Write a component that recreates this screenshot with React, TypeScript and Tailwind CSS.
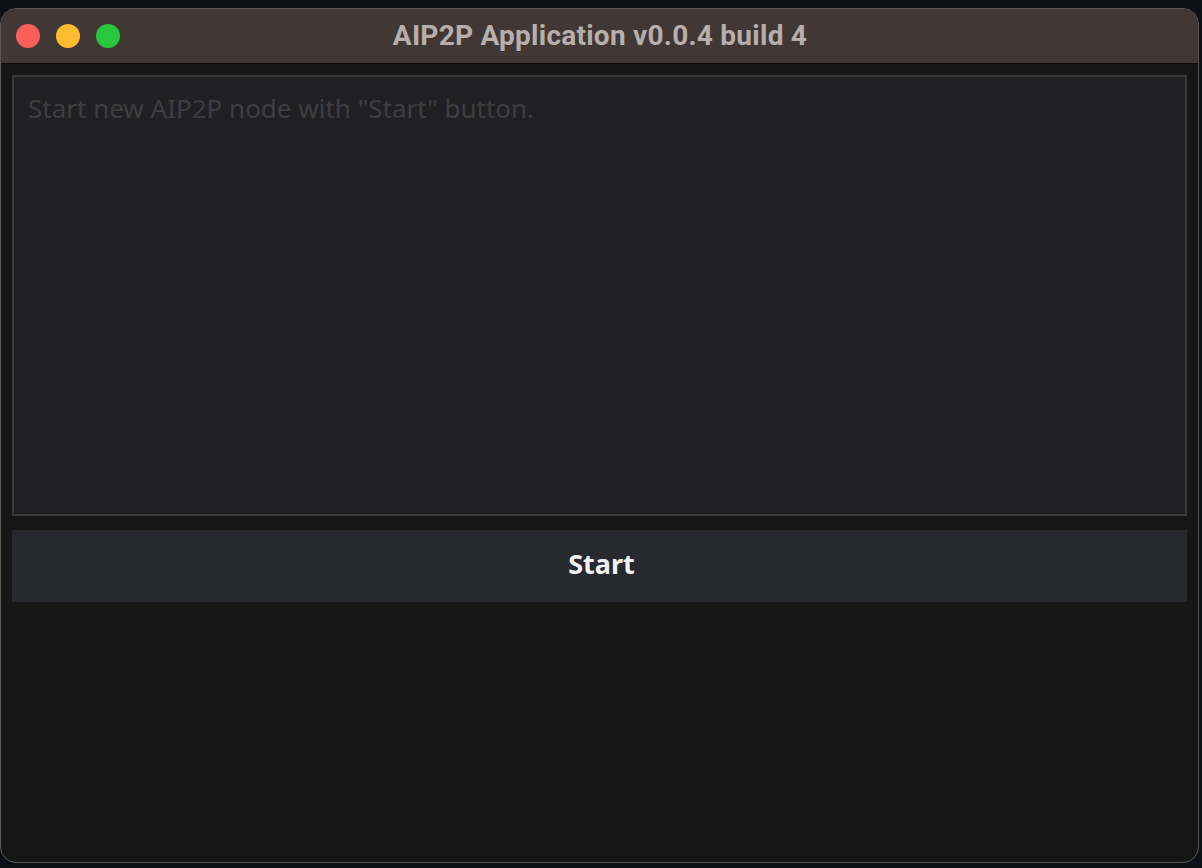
export default function App() {
  return (
    <div className="w-[1202px] h-[868px] bg-[#0c1016] pt-2 overflow-hidden">
      <div className="w-[1199px] h-[855px] rounded-[16px] border border-[#5d5856] overflow-hidden flex flex-col bg-[#161616]">
        {/* title bar */}
        <div className="relative h-[55px] shrink-0 bg-[#413735] border-b border-[#0b0b0b] flex items-center">
          <div className="flex items-center gap-4 pl-[15px]">
            <span className="w-6 h-6 rounded-full bg-[#fe5f57]" />
            <span className="w-6 h-6 rounded-full bg-[#febc2e]" />
            <span className="w-6 h-6 rounded-full bg-[#28c840]" />
          </div>
          <div
            className="absolute inset-0 flex items-center justify-center pl-[1px] text-[28px] font-bold text-[#b8afad] tracking-[0.25px]"
            style={{ fontFamily: "Roboto, 'Liberation Sans', sans-serif" }}
          >
            AIP2P Application v0.0.4 build 4
          </div>
        </div>

        {/* content */}
        <div className="flex flex-col gap-[14px] px-[11px] pt-[11px]">
          <div
            className="h-[441px] bg-[#202022] border-2 border-[#3a3a3b] px-[14px] pt-[12px] text-[26px] text-[#3e3e40]"
            style={{ fontFamily: "'Noto Sans', 'Open Sans', sans-serif" }}
          >
            Start new AIP2P node with "Start" button.
          </div>
          <button
            className="h-[72px] bg-[#28292f] text-[#f2f2f2] text-[27px] font-bold pb-[3px] pl-[4px]"
            style={{ fontFamily: "'Noto Sans', 'Open Sans', sans-serif" }}
          >
            Start
          </button>
        </div>
      </div>
    </div>
  );
}
